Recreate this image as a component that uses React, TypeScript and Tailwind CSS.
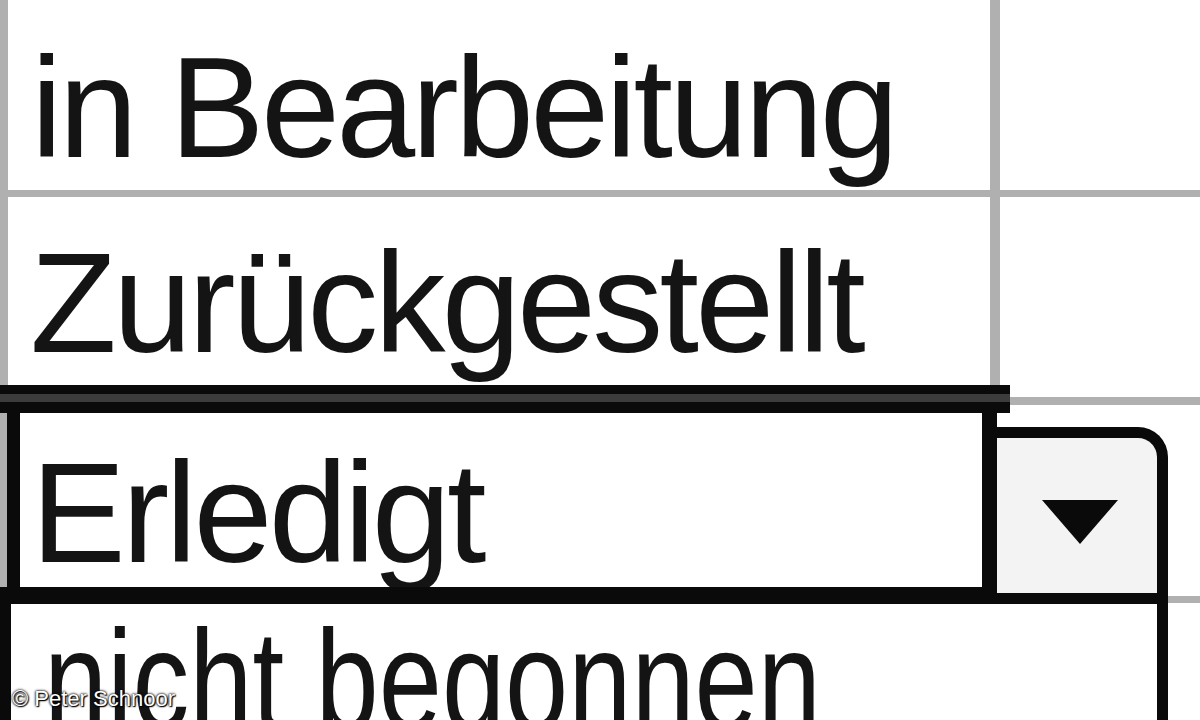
import React from "react";

const G = "bg-[#b0b0b0]";

export default function App() {
  const txt =
    "text-[142px] leading-none tracking-[-3.7px] text-[#141414] whitespace-nowrap";
  return (
    <div className="relative w-[1200px] h-[720px] overflow-hidden bg-white font-['Liberation_Sans',Arial,sans-serif]">
      {/* Row 1 */}
      <div className="flex h-[190px]">
        <div className={`w-[8px] ${G}`} />
        <div className={`w-[982px] pl-[23px] pt-[37px] ${txt}`}>in Bearbeitung</div>
        <div className={`w-[10px] ${G}`} />
        <div className="flex-1" />
      </div>
      <div className={`h-[7px] ${G}`} />
      {/* Row 2 */}
      <div className="flex h-[188px]">
        <div className={`w-[8px] ${G}`} />
        <div className={`w-[982px] pl-[22px] pt-[35px] ${txt}`}>Zurückgestellt</div>
        <div className={`w-[10px] ${G}`} />
        <div className="flex-1" />
      </div>
      {/* Row 3 (selected) */}
      <div className="flex h-[211px]">
        <div className="flex w-[1010px] flex-col">
          <div className="h-[9px] bg-[#0a0a0a]" />
          <div className="h-[8px] bg-[#3c3c3c]" />
          <div className="h-[11px] bg-[#0a0a0a]" />
          <div className="flex flex-1">
            <div className={`w-[7px] ${G}`} />
            <div className="w-[13px] bg-[#0a0a0a]" />
            <div className={`flex-1 bg-white pl-[11px] pt-[29px] ${txt}`}>Erledigt</div>
            <div className="w-[15px] bg-[#0a0a0a]" />
            <div className="w-[13px] bg-white" />
          </div>
          <div className="h-[9px] bg-[#0a0a0a]" />
        </div>
        <div className="flex flex-1 flex-col">
          <div className="h-[12px]" />
          <div className={`h-[8px] ${G}`} />
          <div className="flex-1" />
        </div>
      </div>
      <div className={`h-[7px] ${G}`} />
      <div className="flex-1" />

      {/* Dropdown button */}
      <div className="absolute left-[997px] top-[427px] flex h-[170px] w-[171px] items-center justify-center rounded-tr-[30px] border-t-[11px] border-r-[11px] border-[#0a0a0a] bg-[#f3f3f3] pl-[6px] pt-[8px]">
        <svg width="76" height="44" viewBox="0 0 76 44">
          <polygon points="0,0 76,0 38,44" fill="#0a0a0a" />
        </svg>
      </div>

      {/* Dropdown list */}
      <div className="absolute left-0 top-[593px] h-[140px] w-[1168px] border-[11px] border-b-0 border-[#0a0a0a] bg-white pl-[33px] pt-[6px]">
        <div className="origin-left scale-x-[0.8] text-[142px] leading-none text-[#141414] whitespace-nowrap">
          nicht begonnen
        </div>
      </div>

      {/* Watermark */}
      <div className="absolute left-[12px] top-[688px] text-[22px] leading-none text-white whitespace-nowrap [text-shadow:0_0_3px_#000,0_0_2px_#000,1px_1px_1px_#000]">
        © Peter Schnoor
      </div>
    </div>
  );
}
